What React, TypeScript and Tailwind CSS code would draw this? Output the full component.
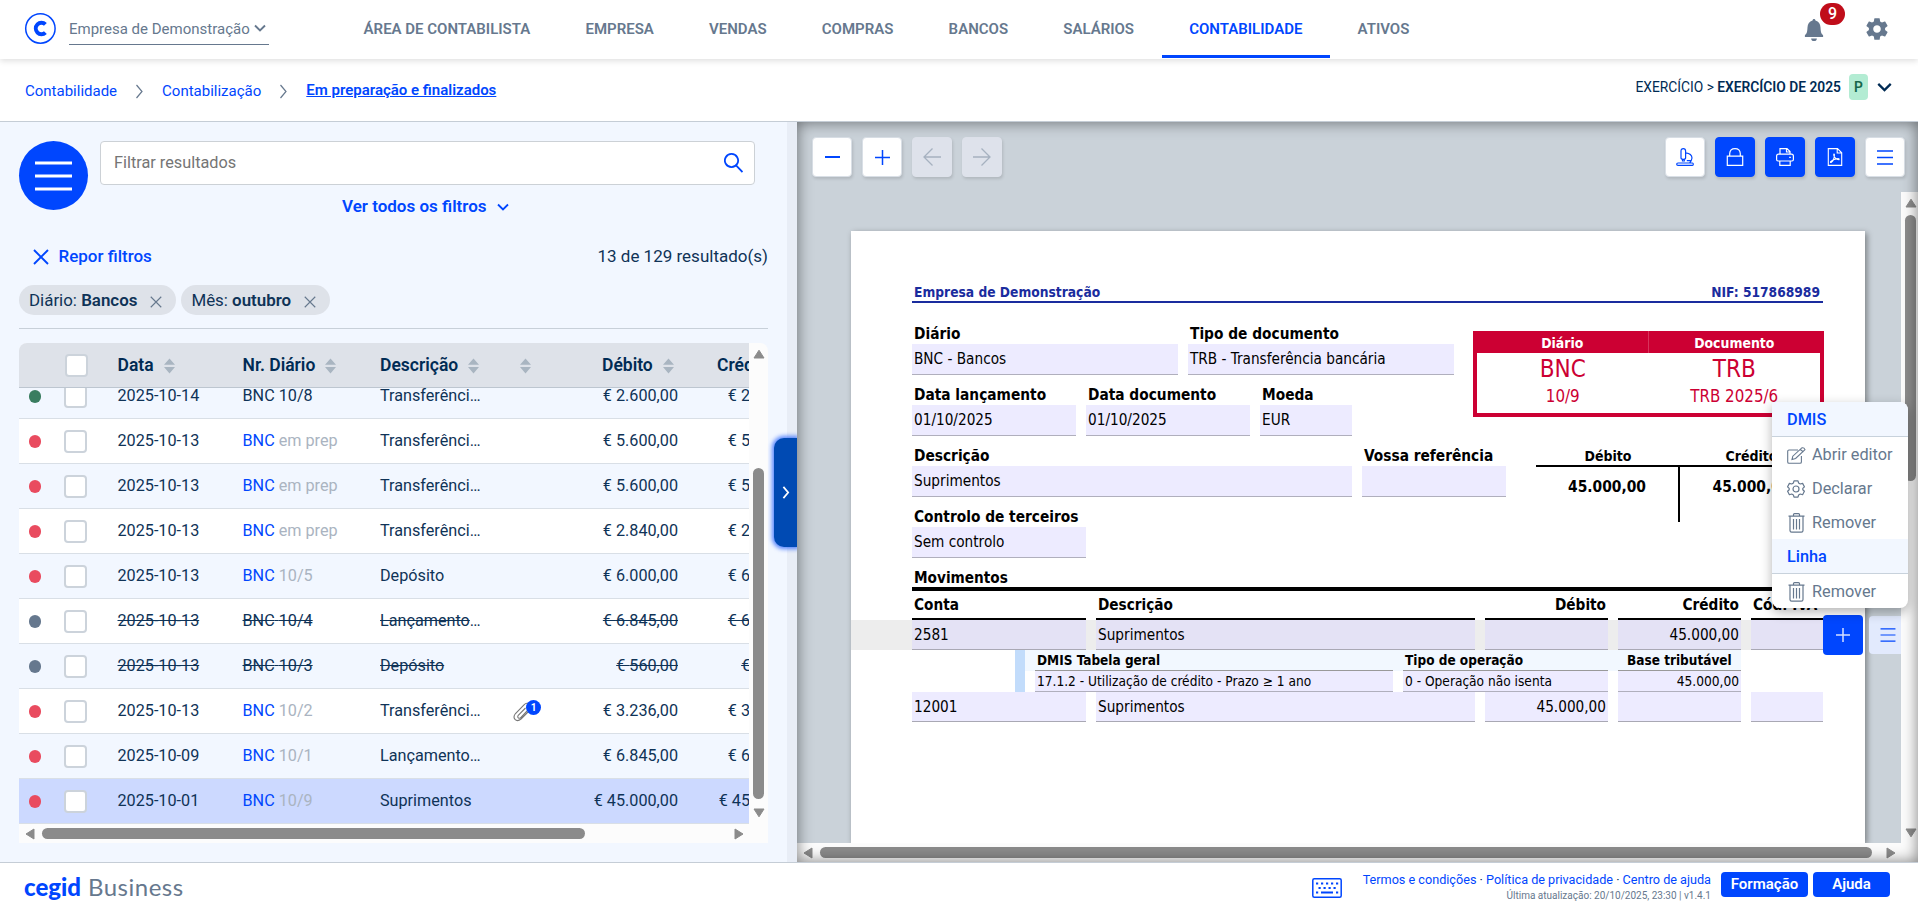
import type { ReactNode } from "react";
import clsx from "clsx";

const NAV_ITEMS = [
  "ÁREA DE CONTABILISTA",
  "EMPRESA",
  "VENDAS",
  "COMPRAS",
  "BANCOS",
  "SALÁRIOS",
  "CONTABILIDADE",
  "ATIVOS",
];

type Status = "ok" | "pending" | "void";

interface Entry {
  date: string;
  journal: string;
  number: string;
  description: string;
  more?: boolean;
  amount: string;
  status: Status;
  attachments?: number;
  selected?: boolean;
}

const ENTRIES: Entry[] = [
  { date: "2025-10-14", journal: "BNC", number: "10/8", description: "Transferênci", more: true, amount: "2.600,00", status: "ok" },
  { date: "2025-10-13", journal: "BNC", number: "em prep", description: "Transferênci", more: true, amount: "5.600,00", status: "pending" },
  { date: "2025-10-13", journal: "BNC", number: "em prep", description: "Transferênci", more: true, amount: "5.600,00", status: "pending" },
  { date: "2025-10-13", journal: "BNC", number: "em prep", description: "Transferênci", more: true, amount: "2.840,00", status: "pending" },
  { date: "2025-10-13", journal: "BNC", number: "10/5", description: "Depósito", amount: "6.000,00", status: "pending" },
  { date: "2025-10-13", journal: "BNC", number: "10/4", description: "Lançamento", more: true, amount: "6.845,00", status: "void" },
  { date: "2025-10-13", journal: "BNC", number: "10/3", description: "Depósito", amount: "560,00", status: "void" },
  { date: "2025-10-13", journal: "BNC", number: "10/2", description: "Transferênci", more: true, amount: "3.236,00", status: "pending", attachments: 1 },
  { date: "2025-10-09", journal: "BNC", number: "10/1", description: "Lançamento", more: true, amount: "6.845,00", status: "pending" },
  { date: "2025-10-01", journal: "BNC", number: "10/9", description: "Suprimentos", amount: "45.000,00", status: "pending", selected: true },
];

const STATUS_COLOR: Record<Status, string> = {
  ok: "bg-[#3a7d60]",
  pending: "bg-[#e94b5f]",
  void: "bg-[#66788e]",
};

const TABLE_COLS = "grid grid-cols-[45px_53.5px_125px_137.5px_136px_107px_75px_125px]";
const LINE_COLS = "grid grid-cols-[174px_379px_123px_123px_72px] gap-x-[10px]";
const DMIS_COLS = "grid grid-cols-[358px_205px_123px] gap-x-[10px]";

/* ---------- icons ---------- */

interface IconProps {
  d: string;
  className?: string;
  width?: number;
  box?: string;
}

function Icon({ d, className, width = 1.5, box = "0 0 24 24" }: IconProps) {
  return (
    <svg viewBox={box} className={clsx("shrink-0", className)} fill="none" stroke="currentColor" strokeWidth={width}>
      <path d={d} />
    </svg>
  );
}

const PATHS = {
  down: "M1 1.5 L6 6.5 L11 1.5",
  right: "M1.5 1 L7 7.5 L1.5 14",
  close: "M1 1 L15 15 M15 1 L1 15",
  bars: "M0 1 H16 M0 7.5 H16 M0 14 H16",
};

function SortIcon({ className }: { className?: string }) {
  return (
    <svg viewBox="0 0 11 16" className={clsx("mt-px h-4 w-[11px] shrink-0", className)} fill="#a9b5c1">
      <path d="M5.5 0.5 L11 6.8 H0 Z M0 9 H11 L5.5 15.5 Z" />
    </svg>
  );
}

function GearSolid() {
  return (
    <svg viewBox="0 0 24 24" className="h-[26px] w-[26px]" fill="#66788e">
      <path d="M19.43 12.98c.04-.32.07-.64.07-.98s-.03-.66-.07-.98l2.11-1.65c.19-.15.24-.42.12-.64l-2-3.46c-.12-.22-.39-.3-.61-.22l-2.49 1c-.52-.4-1.08-.73-1.69-.98l-.38-2.65A.488.488 0 0 0 14 2h-4c-.25 0-.46.18-.49.42l-.38 2.65c-.61.25-1.17.59-1.69.98l-2.49-1c-.23-.09-.49 0-.61.22l-2 3.46c-.13.22-.07.49.12.64l2.11 1.65c-.04.32-.07.65-.07.98s.03.66.07.98l-2.11 1.65c-.19.15-.24.42-.12.64l2 3.46c.12.22.39.3.61.22l2.49-1c.52.4 1.08.73 1.69.98l.38 2.65c.03.24.24.42.49.42h4c.25 0 .46-.18.49-.42l.38-2.65c.61-.25 1.17-.59 1.69-.98l2.49 1c.23.09.49 0 .61-.22l2-3.46c.12-.22.07-.49-.12-.64l-2.11-1.65zM12 15.5c-1.93 0-3.5-1.57-3.5-3.5s1.57-3.5 3.5-3.5 3.5 1.57 3.5 3.5-1.57 3.5-3.5 3.5z" />
    </svg>
  );
}

function TrashIcon() {
  return (
    <Icon
      box="0 0 17 20"
      className="h-5 w-[17px]"
      width={1.2}
      d="M0.5 3.2 H16.5 M5.5 3 V1.6 Q5.5 0.7 6.5 0.7 H10.5 Q11.5 0.7 11.5 1.6 V3 M2 3.2 V17.5 Q2 19.2 3.6 19.2 H13.4 Q15 19.2 15 17.5 V3.2 M5.5 6 V16.5 M8.5 6 V16.5 M11.5 6 V16.5"
    />
  );
}

/* ---------- header ---------- */

function TopBar() {
  return (
    <header className="relative z-10 flex h-[59px] shrink-0 items-start bg-white shadow-[0_2px_6px_rgba(0,0,0,0.13)]">
      <svg viewBox="0 0 32 32" className="mt-3 ml-6 h-8 w-8" fill="none" stroke="#0046fe">
        <circle cx="16.4" cy="16.5" r="14.7" strokeWidth="1.5" />
        <path d="M21.4 12.4 A5.6 5.8 0 1 0 21.4 20.6" strokeWidth="4" />
      </svg>
      <div className="mt-3 ml-[13px] flex h-[33px] w-[200px] items-center gap-1 border-b border-[#66788e] text-[15px] whitespace-nowrap text-[#66788e]">
        <span className="pt-[2px]">Empresa de Demonstração</span>
        <Icon d={PATHS.down} box="0 0 12 8" className="-mt-px h-2 w-3" width={1.9} />
      </div>

      <nav className="ml-[67px] flex h-[58px]">
        {NAV_ITEMS.map((label) => (
          <a
            key={label}
            className={clsx(
              "flex items-center border-b-[3px] px-[27.6px] pt-[4px] text-[15px] font-semibold",
              label === "CONTABILIDADE" ? "border-[#0046fe] text-[#0046fe]" : "border-transparent text-[#66788e]"
            )}
          >
            {label}
          </a>
        ))}
      </nav>

      <div className="relative mt-4 mr-7 ml-auto flex items-center gap-[40px]">
        <svg viewBox="0 0 20 24" className="mt-px h-[23px] w-5" fill="#66788e">
          <path d="M10 1 C10.9 1 11.5 1.7 11.5 2.7 C15 3.6 16.6 6.5 16.8 10 C17 14.5 17.5 16.5 19.5 18 V19.8 H0.5 V18 C2.5 16.5 3 14.5 3.2 10 C3.4 6.5 5 3.6 8.5 2.7 C8.5 1.7 9.1 1 10 1 Z" />
          <path d="M7 21.3 H13 C13 23 11.8 24 10 24 C8.2 24 7 23 7 21.3 Z" />
        </svg>
        <span className="absolute -top-[13px] left-[16px] flex h-[22px] w-[25px] items-center justify-center rounded-full bg-[#c00d1a] text-[16px] font-medium text-white">
          9
        </span>
        <GearSolid />
      </div>
    </header>
  );
}

function Breadcrumb() {
  return (
    <div className="flex h-[63px] shrink-0 items-center border-b border-[#c5cdd6] pt-[2px] pl-[25px] text-[15px] text-[#0046fe]">
      <a>Contabilidade</a>
      <Icon d={PATHS.right} box="0 0 9 15" className="mr-[18px] ml-[18px] h-[15px] w-[9px] text-[#66788e]" width={1.2} />
      <a>Contabilização</a>
      <Icon d={PATHS.right} box="0 0 9 15" className="mr-[18px] ml-[18px] h-[15px] w-[9px] text-[#66788e]" width={1.2} />
      <a className="-mt-0.5 font-semibold underline">Em preparação e finalizados</a>
      <div className="mr-[26px] -mt-2 ml-auto flex items-center text-[13.8px] text-[#002b54]">
        <span>
          EXERCÍCIO &gt; <b className="font-semibold">EXERCÍCIO DE 2025</b>
        </span>
        <span className="ml-2 flex h-[26px] w-[19px] items-center justify-center rounded bg-[#b3ecd3] font-semibold text-[#17664a]">
          P
        </span>
        <Icon d={PATHS.down} box="0 0 12 8" className="ml-[9px] h-[10px] w-[15px]" width={1.8} />
      </div>
    </div>
  );
}

/* ---------- results list ---------- */

function Chip({ label, value }: { label: string; value: string }) {
  return (
    <span className="flex h-[30px] items-center rounded-full bg-[#dee2e9] pt-px pr-[14px] pl-[10px] text-[16.9px]">
      {label}:&nbsp;<b className="font-semibold">{value}</b>
      <Icon d={PATHS.close} box="0 0 16 16" className="mt-0.5 ml-[13px] h-3 w-3 text-[#66788e]" width={1.5} />
    </span>
  );
}

function Checkbox({ className }: { className?: string }) {
  return <span className={clsx("block h-[23px] w-[23px] rounded border-2 border-[#ccd3db] bg-white", className)} />;
}

function HeaderCell({ children, className }: { children?: ReactNode; className?: string }) {
  return <div className={clsx("flex items-center gap-[10px] font-semibold", className)}>{children}</div>;
}

function EntryRow({ entry, odd }: { entry: Entry; odd: boolean }) {
  const isVoid = entry.status === "void";
  const plain = isVoid || entry.status === "ok";

  return (
    <div
      className={clsx(
        TABLE_COLS,
        "h-[45px] shrink-0 items-center border-b border-[#d9dfe6] text-[16.2px]",
        isVoid && "line-through",
        entry.selected ? "bg-[#ccd9ff]" : odd ? "bg-white" : "bg-[#f2f7ff]"
      )}
    >
      <span className={clsx("mt-px ml-[9.5px] block h-[13px] w-[12.5px] rounded-full", STATUS_COLOR[entry.status])} />
      <Checkbox />
      <span>{entry.date}</span>
      <span>
        <span className={plain ? "" : "text-[#0046fe]"}>{entry.journal}</span>{" "}
        <span className={plain ? "" : "text-[#aab4c1]"}>{entry.number}</span>
      </span>
      <span>
        {entry.description}
        {entry.more && <span className="inline-block">…</span>}
      </span>
      <span className="relative h-[22px]">
        {entry.attachments && (
          <>
            <Icon
              box="0 0 20 20"
              className="absolute top-[2px] -left-[4px] h-5 w-5 text-[#777]"
              width={1.1}
              d="M13.5 6 L6.5 13 Q5 15 6.5 16 Q7.8 16.8 9.2 15.2 L17 7 Q19.5 4 17 2 Q14.5 0.2 12 2.8 L3.5 11.5 Q0.8 14.8 3 17.4 Q5.5 20 9 17 L16 10"
            />
            <span className="absolute top-0 left-[10px] flex h-[15px] w-[15px] items-center justify-center rounded-full bg-[#0046fe] text-[10px] font-bold text-white">
              {entry.attachments}
            </span>
          </>
        )}
      </span>
      <span className="-ml-[60px] pr-[20px] text-right whitespace-nowrap">€ {entry.amount}</span>
      <span className="-ml-[60px] pr-[20px] text-right whitespace-nowrap">€ {entry.amount}</span>
    </div>
  );
}

function Triangle({ className, d }: { className?: string; d: string }) {
  return (
    <svg viewBox="0 0 12 12" className={clsx("h-3 w-3 shrink-0", className)} fill="#8b8b8b" stroke="#8b8b8b" strokeLinejoin="round">
      <path d={d} />
    </svg>
  );
}

const ARROW = {
  up: "M6 2.2 L11 10 H1 Z",
  down: "M6 9.8 L11 2 H1 Z",
  left: "M2 6 L10 1 V11 Z",
  right: "M10 6 L2 1 V11 Z",
};

function ResultsTable() {
  return (
    <div className="mt-[14px] flex h-[500px] w-[749px] flex-col overflow-hidden rounded-t-lg bg-[#fcfcfc]">
      <div className="flex h-[481px]">
        <div className="flex w-[730px] flex-col overflow-hidden">
          <div className={clsx(TABLE_COLS, "z-10 h-[45px] shrink-0 border-b border-[#bdc6d0] bg-[#dee2e9] text-[17.5px] text-[#002b54]")}>
            <span />
            <HeaderCell>
              <Checkbox className="ml-px" />
            </HeaderCell>
            <HeaderCell>
              Data <SortIcon />
            </HeaderCell>
            <HeaderCell>
              Nr. Diário <SortIcon />
            </HeaderCell>
            <HeaderCell>
              Descrição <SortIcon />
            </HeaderCell>
            <HeaderCell className="pl-[4px]">
              <SortIcon />
            </HeaderCell>
            <HeaderCell className="-ml-[21px]">
              Débito <SortIcon />
            </HeaderCell>
            <HeaderCell className="pl-[19px]">Crédito</HeaderCell>
          </div>
          <div className="flex h-[436px] flex-col justify-end overflow-hidden">
            {ENTRIES.map((entry, i) => (
              <EntryRow key={i} entry={entry} odd={i % 2 === 1} />
            ))}
          </div>
        </div>
        <div className="flex w-[19px] flex-col items-center py-[5px]">
          <Triangle d={ARROW.up} />
          <div className="mt-[108px] h-[336px] w-[11px] rounded-full bg-[#8b8b8b]" />
          <Triangle d={ARROW.down} className="mt-[8px]" />
        </div>
      </div>
      <div className="flex h-[19px] items-center pl-[5px]">
        <Triangle d={ARROW.left} />
        <div className="ml-[6px] h-[11px] w-[543px] rounded-full bg-[#8b8b8b]" />
        <Triangle d={ARROW.right} className="ml-[148px]" />
      </div>
    </div>
  );
}

function ResultsPanel() {
  return (
    <section className="relative flex w-[797px] shrink-0 flex-col border-r-[10px] border-[#e8edf6] bg-[#f2f7ff] pl-[19px] text-[16.3px] text-[#0f3357]">
      <div className="mt-[19px] flex">
        <button className="flex h-[69px] w-[69px] items-center justify-center rounded-full bg-[#0046fe] pr-px text-white">
          <Icon d="M0 2 H37 M0 15 H37 M0 28 H37" box="0 0 37 30" className="h-[30px] w-[37px]" width={2.8} />
        </button>
        <div className="ml-3 flex h-11 w-[655px] items-center justify-between rounded border border-[#ccd1d6] bg-white pr-[11px] pl-[13px] text-[#757575]">
          Filtrar resultados
          <Icon
            d="M7.5 0.9 A6.6 6.6 0 1 1 7.49 0.9 Z M12.3 12.6 L18.5 19"
            box="0 0 19 20"
            className="h-5 w-[19px] text-[#0046fe]"
            width={1.8}
          />
        </div>
      </div>
      <div className="-mt-[13px] ml-[323px] flex h-5 items-center gap-[10px] text-[17px] font-semibold text-[#0046fe]">
        Ver todos os filtros
        <Icon d={PATHS.down} box="0 0 12 8" className="h-2 w-3" width={1.8} />
      </div>
      <div className="mt-[30px] mr-[19px] flex h-5 items-center pl-[14px] text-[17px]">
        <Icon d={PATHS.close} box="0 0 16 16" className="h-4 w-4 text-[#0046fe]" width={1.9} />
        <span className="ml-[9.5px] font-medium text-[#0046fe]">Repor filtros</span>
        <span className="ml-auto">13 de 129 resultado(s)</span>
      </div>
      <div className="mt-[18px] flex gap-[5px]">
        <Chip label="Diário" value="Bancos" />
        <Chip label="Mês" value="outubro" />
      </div>
      <div className="mt-[13px] w-[749px] border-b border-[#c8d0d9]" />
      <ResultsTable />
      <button className="absolute top-[316px] -right-[10px] flex h-[109px] w-[23px] items-center justify-center rounded-l-[10px] bg-[#004ab3] text-white shadow-[0_0_4px_2px_rgba(0,70,254,0.65)] [clip-path:inset(-8px_0_-8px_-8px)]">
        <Icon d={PATHS.right} box="0 0 9 15" className="h-[13px] w-2" width={2} />
      </button>
    </section>
  );
}

/* ---------- document preview ---------- */

type Tone = "white" | "blue" | "disabled";

function ToolButton({ tone, children }: { tone: Tone; children: ReactNode }) {
  return (
    <button
      className={clsx(
        "flex h-10 w-10 items-center justify-center rounded border shadow-[1px_2px_3px_rgba(0,0,0,0.12)]",
        tone === "white" && "border-[#d9dfe6] bg-white text-[#0046fe]",
        tone === "blue" && "border-[#0046fe] bg-[#0046fe] text-white",
        tone === "disabled" && "border-[#dee2eb] bg-[#dee2eb] text-[#a6b1c0]"
      )}
    >
      {children}
    </button>
  );
}

function Toolbar() {
  return (
    <div className="flex h-[70px] gap-[10px] pt-[15px] pr-[13px] pl-[15px]">
      <ToolButton tone="white">
        <Icon d="M0 8 H15" box="0 0 15 16" className="h-4 w-[15px]" width={2} />
      </ToolButton>
      <ToolButton tone="white">
        <Icon d="M0 7.5 H15 M7.5 0 V15" box="0 0 15 15" className="h-[15px] w-[15px]" />
      </ToolButton>
      <ToolButton tone="disabled">
        <Icon d="M18 9 H1 M9.5 0.5 L1 9 L9.5 17.5" box="0 0 18 18" className="h-[18px] w-[18px]" width={1.3} />
      </ToolButton>
      <ToolButton tone="disabled">
        <Icon d="M0 9 H17 M8.5 0.5 L17 9 L8.5 17.5" box="0 0 18 18" className="h-[18px] w-[18px]" width={1.3} />
      </ToolButton>
      <div className="ml-auto flex gap-[10px]">
        <ToolButton tone="white">
          <Icon
            box="0 0 18 18"
            className="h-[18px] w-[18px]"
            width={1.2}
            d="M5 10 V3 Q5 0.7 7.3 0.7 Q9.6 0.7 9.6 3 V10 Q9.6 11.3 7.3 11.3 Q5 11.3 5 10 Z M6.5 11.5 V13 H8.3 V11.5 M9.8 4.8 Q15.8 5.5 16 10 Q15.7 12.5 13.7 14.8 M10.8 12.6 H14.8 M2 15 H16.4 Q17.3 15 17.3 16.2 Q17.3 17.3 16.4 17.3 H2 Q0.7 17.3 0.7 16.2 Q0.7 15 2 15 Z"
          />
        </ToolButton>
        <ToolButton tone="blue">
          <Icon
            box="0 0 18 18"
            className="h-[18px] w-[18px]"
            width={1.2}
            d="M1.3 8.2 H16.7 V17.4 H1.3 Z M3.7 8 V5.6 Q3.9 0.6 9 0.6 Q14.1 0.6 14.3 5.6 V8"
          />
        </ToolButton>
        <ToolButton tone="blue">
          <Icon
            box="0 0 18 18"
            className="h-[18px] w-[18px]"
            width={1.2}
            d="M4 6 V0.6 H11 L14 3.6 V6 M10.5 0.8 V4 H13.8 M3.5 13 H2 Q0.6 13 0.6 11.6 V8.2 Q0.6 6.2 2.6 6.2 H15.4 Q17.4 6.2 17.4 8.2 V11.6 Q17.4 13 16 13 H14.5 M2.6 13 H15.4 M3.8 13 V17.4 H14.2 V13 M13.2 9.3 H14.8"
          />
        </ToolButton>
        <ToolButton tone="blue">
          <Icon
            box="0 0 18 18"
            className="h-[18px] w-[18px]"
            width={1.1}
            d="M2.3 0.6 H11.5 L15.7 4.8 V17.4 H2.3 Z M11.2 0.8 V5 H15.5 M5 14.5 Q8.5 12 8.4 6.5 Q8 5.5 7.7 6.8 Q8.5 11 13 11.6 Q13.6 10.4 11 10.7 Q7 11.3 4.6 13.6 Q4.2 14.6 5 14.5"
          />
        </ToolButton>
        <ToolButton tone="white">
          <Icon d={PATHS.bars} box="0 0 16 15" className="h-[15px] w-4" />
        </ToolButton>
      </div>
    </div>
  );
}

function Field({ label, value, className }: { label: string; value?: string; className: string }) {
  return (
    <div className={clsx("flex h-[61px] shrink-0 flex-col", className)}>
      <div className="flex h-[30px] items-end pl-[2px] text-[15.3px] leading-[20px] font-bold whitespace-nowrap">{label}</div>
      <div className="flex h-[31px] items-center border-b border-[#b0afbd] bg-[#edebff] pt-px pl-[2px]">{value}</div>
    </div>
  );
}

function Stamp() {
  return (
    <div className="mt-[17px] -mr-px grid h-[86px] w-[351px] grid-cols-2 grid-rows-[22px_31px_29px] border-4 border-t-0 border-[#cc0033] text-center text-[#cc0033]">
      <div className="flex items-center justify-center border-r border-[#d8335c] bg-[#cc0033] pt-[3px] text-[13.9px] font-bold text-white">
        Diário
      </div>
      <div className="flex items-center justify-center bg-[#cc0033] pt-[3px] text-[13.9px] font-bold text-white">Documento</div>
      <div className="text-[24px] leading-[32px]">BNC</div>
      <div className="text-[24px] leading-[32px]">TRB</div>
      <div className="text-[16.8px] leading-[25px]">10/9</div>
      <div className="text-[16.8px] leading-[25px]">TRB 2025/6</div>
    </div>
  );
}

function Balance() {
  return (
    <div className="grid h-[86px] w-[287px] grid-cols-[144px_143px] grid-rows-[31px_55px] text-center font-bold">
      <div className="flex items-end justify-center border-b-2 border-black text-[14px] leading-[17px]">Débito</div>
      <div className="flex items-end justify-center border-b-2 border-black text-[14px] leading-[17px]">Crédito</div>
      <div className="border-r-2 border-black pt-[9px] text-[15.4px]">45.000,00</div>
      <div className="pt-[9px] text-[15.4px]">45.000,00</div>
    </div>
  );
}

function LineRow({ cells, active }: { cells: string[]; active?: boolean }) {
  return (
    <div className={clsx(LINE_COLS, "-ml-[61px] h-[30px] pl-[61px]", active && "bg-[#ededed]")}>
      {cells.map((cell, i) => (
        <div
          key={i}
          className={clsx(
            "flex items-center border-b border-[#a9a8b4] px-[2px] pt-[2px]",
            i > 1 && "justify-end",
            active ? "bg-[#e4e2f5]" : "bg-[#edebff]"
          )}
        >
          {cell}
        </div>
      ))}
    </div>
  );
}

function DocumentPage() {
  return (
    <div className="relative mt-[39px] ml-[54px] h-[612px] w-[1014px] bg-white pr-[42px] pl-[61px] font-['DejaVu_Sans_Condensed','DejaVu_Sans',sans-serif] text-[15.2px] [font-stretch:condensed] text-black shadow-[2px_2px_6px_rgba(0,0,0,0.4)]">
      <div className="flex h-[72px] items-end justify-between border-b-2 border-[#1a2c9e] pr-[3px] pl-[2px] text-[13.7px] leading-[17px] font-bold text-[#1a2c9e]">
        <span>Empresa de Demonstração</span>
        <span>NIF: 517868989</span>
      </div>

      <div className="mt-[11px] flex justify-between">
        <div>
          <div className="flex gap-[10px]">
            <Field label="Diário" value="BNC - Bancos" className="w-[266px]" />
            <Field label="Tipo de documento" value="TRB - Transferência bancária" className="w-[266px]" />
          </div>
          <div className="flex gap-[10px]">
            <Field label="Data lançamento" value="01/10/2025" className="w-[164px]" />
            <Field label="Data documento" value="01/10/2025" className="w-[164px]" />
            <Field label="Moeda" value="EUR" className="w-[92px]" />
          </div>
        </div>
        <Stamp />
      </div>

      <div className="flex justify-between">
        <div>
          <div className="flex gap-[10px]">
            <Field label="Descrição" value="Suprimentos" className="w-[440px]" />
            <Field label="Vossa referência" className="w-[144px]" />
          </div>
          <Field label="Controlo de terceiros" value="Sem controlo" className="w-[174px]" />
        </div>
        <Balance />
      </div>

      <div className="flex h-[33px] items-end border-b-4 border-black pl-[2px] leading-[17px] font-bold">Movimentos</div>
      <div className={clsx(LINE_COLS, "h-[29px] font-bold")}>
        {["Conta", "Descrição", "Débito", "Crédito", "Cód. IVA"].map((label, i) => (
          <div
            key={label}
            className={clsx("border-b-2 border-black px-[2px] pt-[3px] whitespace-nowrap", (i === 2 || i === 3) && "text-right")}
          >
            {label}
          </div>
        ))}
      </div>
      <LineRow active cells={["2581", "Suprimentos", "", "45.000,00", ""]} />
      <div className="ml-[103px] w-[726px] border-l-[10px] border-[#c2dcfb] text-[13.6px] leading-[20px]">
        <div className={clsx(DMIS_COLS, "h-[21px] bg-[#f2f8ff] pl-[10px] text-[13.5px] font-bold")}>
          <div className="border-b border-[#999] pl-[2px]">DMIS Tabela geral</div>
          <div className="border-b border-[#999] pl-[2px]">Tipo de operação</div>
          <div className="border-b border-[#999] pl-[9px]">Base tributável</div>
        </div>
        <div className={clsx(DMIS_COLS, "h-[21px] pl-[10px]")}>
          <div className="border-b border-[#b0afbd] bg-[#edebff] pl-[2px]">17.1.2 - Utilização de crédito - Prazo ≥ 1 ano</div>
          <div className="border-b border-[#b0afbd] bg-[#edebff] pl-[2px]">0 - Operação não isenta</div>
          <div className="border-b border-[#b0afbd] bg-[#edebff] pr-[2px] text-right">45.000,00</div>
        </div>
      </div>
      <LineRow cells={["12001", "Suprimentos", "45.000,00", "", ""]} />

      {/* row actions float beside the active line */}
      <div className="absolute top-[384px] left-[972px] flex items-center gap-[6px]">
        <button className="flex h-10 w-10 items-center justify-center rounded bg-[#0046fe] text-[#d5e0ff]">
          <Icon d="M0 7 H14 M7 0 V14" box="0 0 14 14" className="h-[14px] w-[14px]" />
        </button>
        <button className="flex h-[38px] w-[40px] items-center rounded bg-[#e2eafd] pl-[11px] text-[#0046fe]">
          <Icon d={PATHS.bars} box="0 0 16 15" className="h-[14px] w-4" width={1.3} />
        </button>
      </div>
    </div>
  );
}

function MenuHeading({ children }: { children: ReactNode }) {
  return (
    <div className="flex h-[35px] items-center border-b border-[#c8d2dc] bg-[#f2f7ff] pt-[2px] pl-[15px] font-medium text-[#0046fe]">
      {children}
    </div>
  );
}

function MenuItem({ icon, children }: { icon: ReactNode; children: ReactNode }) {
  return (
    <div className="flex h-[34px] items-center gap-[7px] pt-[2px] pl-[15px] text-[#66788e]">
      <span className="flex w-[18px] justify-center">{icon}</span>
      {children}
    </div>
  );
}

function ContextMenu() {
  return (
    <div className="absolute top-[280px] left-[975px] z-20 w-[136px] overflow-hidden rounded-lg rounded-tl-none bg-white text-[16.3px] whitespace-nowrap shadow-[0_4px_12px_rgba(0,0,0,0.3)]">
      <MenuHeading>DMIS</MenuHeading>
      <MenuItem
        icon={
          <Icon
            box="0 0 19 17"
            className="h-[17px] w-[19px]"
            width={1.1}
            d="M11 3 H2 Q0.7 3 0.7 4.3 V15 Q0.7 16.3 2 16.3 H13 Q14.4 16.3 14.4 15 V9 M5 12.5 L5.8 9.2 L14.8 0.9 Q17 0.3 18 2.6 L8.6 11.5 Z M13.3 2.4 L16.4 5"
          />
        }
      >
        Abrir editor
      </MenuItem>
      <MenuItem
        icon={
          <svg viewBox="0 0 18 18" className="h-[18px] w-[18px]" fill="none" stroke="currentColor" strokeWidth="1.2" strokeLinejoin="round">
            <path d="M7 0.8 H11 L11.6 3 L13.3 4 L15.6 3.4 L17.4 6.8 L15.8 8.4 V9.8 L17.4 11.3 L15.6 14.7 L13.3 14 L11.6 15 L11 17.2 H7 L6.4 15 L4.7 14 L2.4 14.7 L0.6 11.3 L2.2 9.8 V8.4 L0.6 6.8 L2.4 3.4 L4.7 4 L6.4 3 Z" />
            <circle cx="9" cy="9" r="3" />
          </svg>
        }
      >
        Declarar
      </MenuItem>
      <MenuItem icon={<TrashIcon />}>Remover</MenuItem>
      <MenuHeading>Linha</MenuHeading>
      <MenuItem icon={<TrashIcon />}>Remover</MenuItem>
    </div>
  );
}

function Preview() {
  return (
    <section className="relative flex min-w-0 flex-1 flex-col bg-[#cad2d9]">
      <Toolbar />
      <div className="flex h-[651px]">
        <div className="w-[1104px] shrink-0 overflow-hidden">
          <DocumentPage />
        </div>
        <div className="flex w-[17px] flex-col items-center overflow-hidden bg-[#fcfcfc] pt-[5px] pl-[2px]">
          <Triangle d={ARROW.up} />
          <div className="mt-[6px] h-[266px] w-[11px] shrink-0 rounded-full bg-[#8b8b8b]" />
          <Triangle d={ARROW.down} className="mt-auto mb-[4px]" />
        </div>
      </div>
      <div className="flex h-[19px] items-center bg-[#fcfcfc] pl-[5px]">
        <Triangle d={ARROW.left} />
        <div className="ml-[6px] h-[11px] w-[1052px] rounded-full bg-[#8b8b8b]" />
        <Triangle d={ARROW.right} className="ml-[13px]" />
      </div>
      <div className="pointer-events-none absolute inset-0 shadow-[inset_0_0_15px_rgba(0,0,0,0.5)]" />
      <ContextMenu />
    </section>
  );
}

/* ---------- footer ---------- */

function Footer() {
  return (
    <footer className="flex h-[46px] shrink-0 items-start border-t border-[#c5cdd6] bg-white pl-6">
      <div className="flex items-baseline gap-[7px] font-['Lato',sans-serif] text-[24px] leading-[48px]">
        <span className="font-black text-[#0046fe]">cegid</span>
        <span className="tracking-[0.5px] text-[#66788e]">Business</span>
      </div>
      <svg viewBox="0 0 30 20" className="mt-[15px] mr-[21px] ml-auto h-5 w-[30px]" fill="none" stroke="#0046fe">
        <rect x="0.8" y="0.8" width="28.4" height="18.4" rx="1.5" strokeWidth="1.5" />
        <path d="M4 5.5 H27 M6.5 10 H24.5" strokeWidth="2.2" strokeDasharray="2.2 2.8" />
        <path d="M4 14.5 H6.2 M9 14.5 H21 M24 14.5 H26.2" strokeWidth="2" />
      </svg>
      <div className="mt-[8px] text-right">
        <div className="text-[12.65px] leading-[18px] text-[#0046fe]">
          Termos e condições <span className="text-[#002b54]">·</span> Política de privacidade{" "}
          <span className="text-[#002b54]">·</span> Centro de ajuda
        </div>
        <div className="text-[10px] leading-[14px] text-[#66788e]">Última atualização: 20/10/2025, 23:30 | v1.4.1</div>
      </div>
      <div className="mt-[9px] mr-[28px] ml-[10px] flex gap-[5px] text-[15px] font-semibold text-white">
        <button className="h-[25px] w-[87px] rounded bg-[#0046fe]">Formação</button>
        <button className="h-[25px] w-[77px] rounded bg-[#0046fe]">Ajuda</button>
      </div>
    </footer>
  );
}

export default function App() {
  return (
    <div className="flex h-[908px] w-[1918px] flex-col overflow-hidden bg-white font-['Roboto',sans-serif]">
      <TopBar />
      <Breadcrumb />
      <main className="flex h-[740px] shrink-0">
        <ResultsPanel />
        <Preview />
      </main>
      <Footer />
    </div>
  );
}
